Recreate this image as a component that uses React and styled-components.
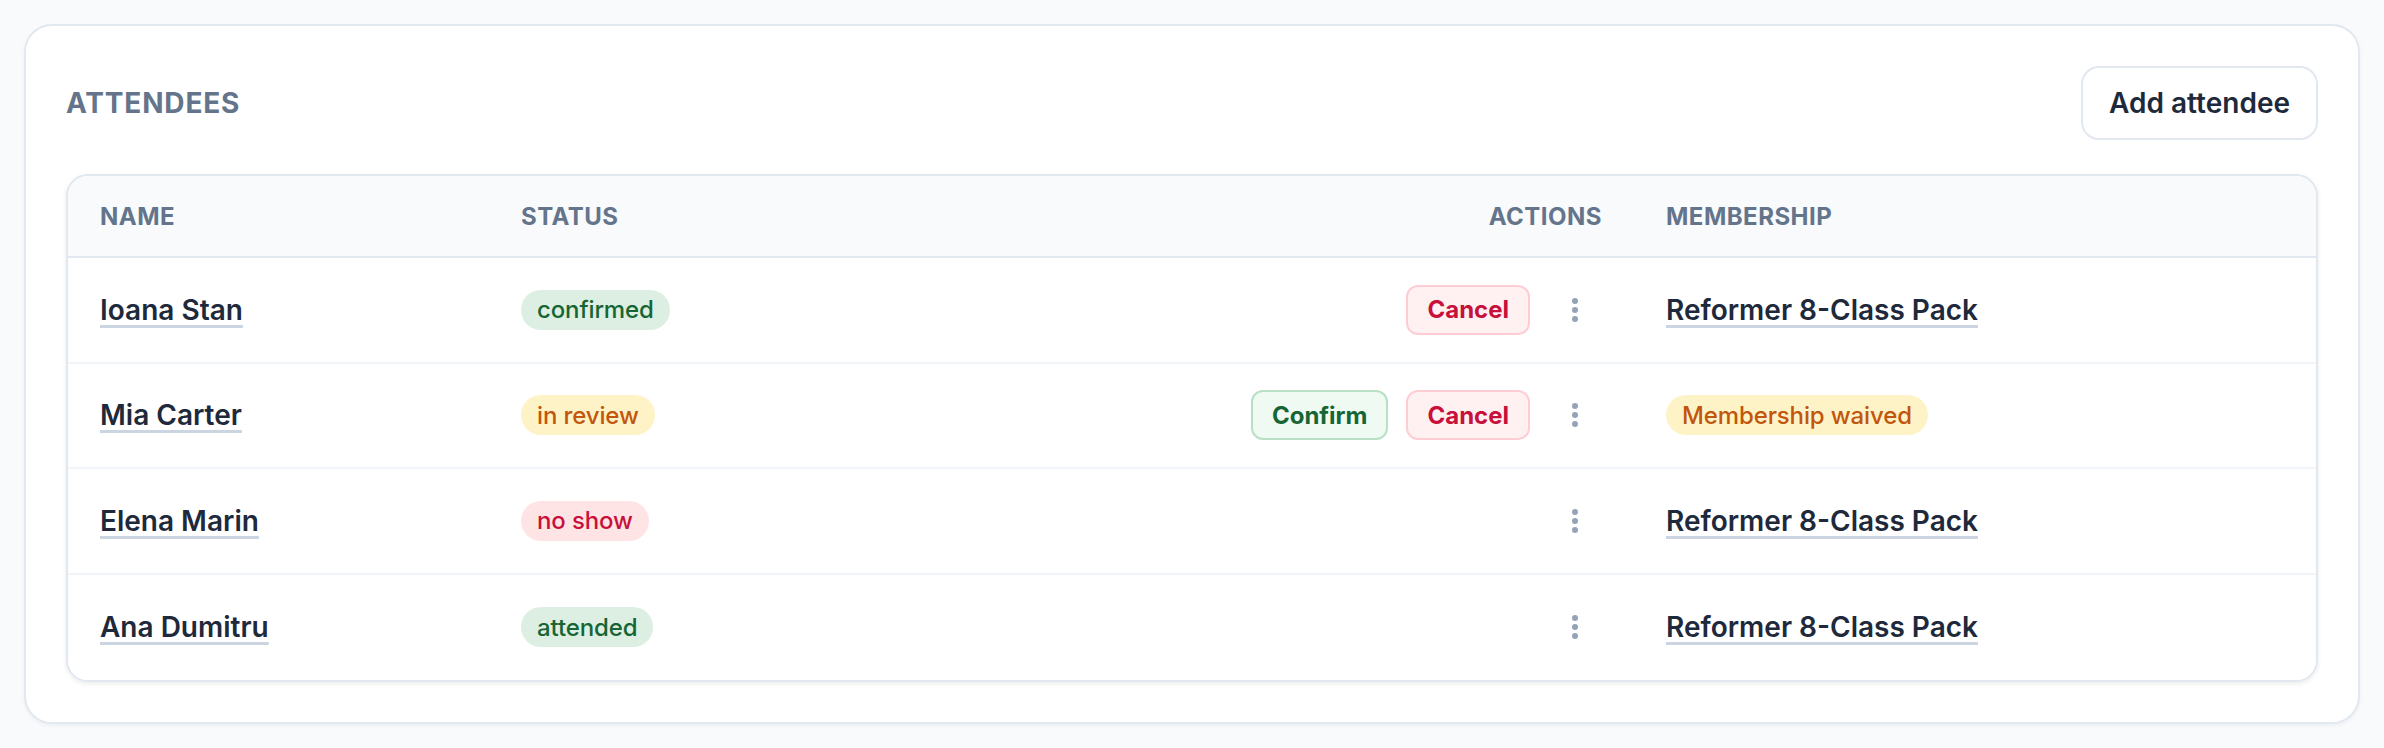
import React from "react";
import styled, { createGlobalStyle } from "styled-components";

const Global = createGlobalStyle`
  * { box-sizing: border-box; }
  html, body { margin: 0; padding: 0; background: #f8fafc; }
  body {
    font-family: Inter, "Noto Sans", "Liberation Sans", sans-serif;
    color: #1e293b;
    -webkit-font-smoothing: antialiased;
  }
`;

const Page = styled.div`
  padding: 24px 24px 26px;
`;

const Card = styled.section`
  background: #ffffff;
  border: 2px solid #e2e8f0;
  border-radius: 28px;
  padding: 40px;
  box-shadow: 0 2px 4px rgba(15, 23, 42, 0.05);
`;

const CardHeader = styled.div`
  display: flex;
  align-items: center;
  justify-content: space-between;
  margin-bottom: 34px;
`;

const Title = styled.h2`
  margin: 0;
  font-size: 28px;
  font-weight: 700;
  letter-spacing: 0.03em;
  color: #64748b;
  text-transform: uppercase;
`;

const GhostButton = styled.button`
  height: 74px;
  padding: 0 26px;
  border: 2px solid #e2e8f0;
  border-radius: 18px;
  background: #ffffff;
  font-family: inherit;
  font-size: 28px;
  font-weight: 600;
  color: #1e293b;
  cursor: pointer;
`;

const Table = styled.div`
  border: 2px solid #e2e8f0;
  border-radius: 22px;
  overflow: hidden;
  background: #ffffff;
  box-shadow: 0 2px 5px rgba(15, 23, 42, 0.08);
`;

const Row = styled.div`
  display: grid;
  grid-template-columns: 421px 1fr 420px 682px;
  align-items: center;
  height: ${(p) => (p.$head ? "82px" : "105.5px")};
  background: ${(p) => (p.$head ? "#f8fafc" : "#ffffff")};
  border-bottom: 2px solid ${(p) => (p.$head ? "#e2e8f0" : "#f1f5f9")};
  &:last-child { border-bottom: none; }
`;

const HeadCell = styled.div`
  padding: 0 32px;
  font-size: 24px;
  font-weight: 700;
  letter-spacing: 0.02em;
  text-transform: uppercase;
  color: #64748b;
  text-align: ${(p) => (p.$right ? "right" : "left")};
`;

const Cell = styled.div`
  padding: 0 32px;
  display: flex;
  align-items: center;
  justify-content: ${(p) => (p.$right ? "flex-end" : "flex-start")};
  gap: 18px;
`;

const LinkText = styled.a`
  font-size: 28px;
  font-weight: 600;
  color: #1e293b;
  text-decoration: underline;
  text-decoration-color: #cbd5e1;
  text-decoration-thickness: 3px;
  text-underline-offset: 5px;
  cursor: pointer;
`;

const tones = {
  green: { bg: "#dcefe2", fg: "#166534" },
  amber: { bg: "#fef3c7", fg: "#c2560c" },
  rose: { bg: "#ffe4e6", fg: "#c8103a" },
};

const Badge = styled.span`
  display: inline-flex;
  align-items: center;
  height: 40px;
  padding: 0 16px;
  border-radius: 999px;
  font-size: 24px;
  font-weight: 500;
  letter-spacing: -0.005em;
  background: ${(p) => tones[p.$tone].bg};
  color: ${(p) => tones[p.$tone].fg};
`;

const actionTones = {
  confirm: { bg: "#effaf2", border: "#b9dfc5", fg: "#166534" },
  cancel: { bg: "#fff1f2", border: "#fecdd3", fg: "#c8103a" },
};

const ActionButton = styled.button`
  height: 50px;
  padding: 0 19px;
  border-radius: 12px;
  border: 2px solid ${(p) => actionTones[p.$kind].border};
  background: ${(p) => actionTones[p.$kind].bg};
  color: ${(p) => actionTones[p.$kind].fg};
  font-family: inherit;
  font-size: 24px;
  font-weight: 700;
  cursor: pointer;
`;

const KebabButton = styled.button`
  width: 54px;
  height: 50px;
  border: none;
  background: transparent;
  padding: 0;
  display: flex;
  align-items: center;
  justify-content: center;
  cursor: pointer;
`;

const Kebab = () => (
  <KebabButton aria-label="More actions">
    <svg width="6" height="24" viewBox="0 0 6 24">
      <circle cx="3" cy="3" r="3" fill="#94a3b8" />
      <circle cx="3" cy="12" r="3" fill="#94a3b8" />
      <circle cx="3" cy="21" r="3" fill="#94a3b8" />
    </svg>
  </KebabButton>
);

const attendees = [
  { name: "Ioana Stan", status: "confirmed", tone: "green", actions: ["cancel"], membership: { text: "Reformer 8-Class Pack" } },
  { name: "Mia Carter", status: "in review", tone: "amber", actions: ["confirm", "cancel"], membership: { text: "Membership waived", badge: true } },
  { name: "Elena Marin", status: "no show", tone: "rose", actions: [], membership: { text: "Reformer 8-Class Pack" } },
  { name: "Ana Dumitru", status: "attended", tone: "green", actions: [], membership: { text: "Reformer 8-Class Pack" } },
];

export default function App() {
  return (
    <Page>
      <Global />
      <Card>
        <CardHeader>
          <Title>Attendees</Title>
          <GhostButton>Add attendee</GhostButton>
        </CardHeader>
        <Table>
          <Row $head>
            <HeadCell>Name</HeadCell>
            <HeadCell>Status</HeadCell>
            <HeadCell $right>Actions</HeadCell>
            <HeadCell>Membership</HeadCell>
          </Row>
          {attendees.map((a) => (
            <Row key={a.name}>
              <Cell>
                <LinkText>{a.name}</LinkText>
              </Cell>
              <Cell>
                <Badge $tone={a.tone}>{a.status}</Badge>
              </Cell>
              <Cell $right>
                {a.actions.map((k) => (
                  <ActionButton key={k} $kind={k}>
                    {k === "confirm" ? "Confirm" : "Cancel"}
                  </ActionButton>
                ))}
                <Kebab />
              </Cell>
              <Cell>
                {a.membership.badge ? (
                  <Badge $tone="amber">{a.membership.text}</Badge>
                ) : (
                  <LinkText>{a.membership.text}</LinkText>
                )}
              </Cell>
            </Row>
          ))}
        </Table>
      </Card>
    </Page>
  );
}
